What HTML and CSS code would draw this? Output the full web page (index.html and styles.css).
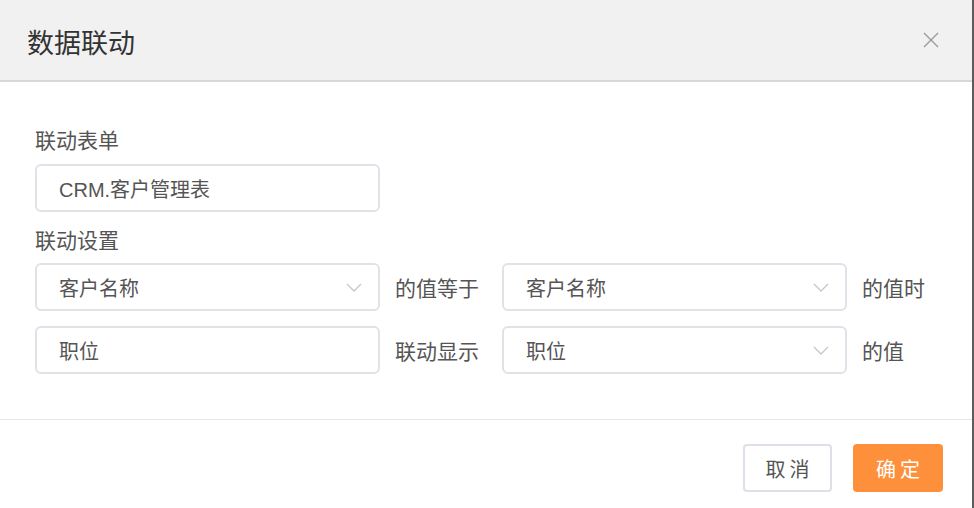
FILE: index.html
```html
<!DOCTYPE html>
<html lang="zh">
<head>
<meta charset="utf-8">
<title>数据联动</title>
<link rel="stylesheet" href="styles.css">
</head>
<body>
<div class="dialog">
  <div class="dialog-header">
    <h1 class="dialog-title">数据联动</h1>
    <button class="close-btn" aria-label="关闭">
      <svg width="16" height="16" viewBox="0 0 16 16"><path d="M1 1L15 15M15 1L1 15" stroke="#9a9a9a" stroke-width="1.4" fill="none"/></svg>
    </button>
  </div>
  <div class="dialog-body">
    <div class="field-label">联动表单</div>
    <div class="input wide">CRM.客户管理表</div>
    <div class="field-label second">联动设置</div>
    <div class="rule-grid">
      <div class="input select">客户名称<svg class="chev" width="16" height="9" viewBox="0 0 16 9"><path d="M1 1L8 8L15 1" stroke="#c3c7cf" stroke-width="1.3" fill="none"/></svg></div>
      <div class="mid">的值等于</div>
      <div class="input select">客户名称<svg class="chev" width="16" height="9" viewBox="0 0 16 9"><path d="M1 1L8 8L15 1" stroke="#c3c7cf" stroke-width="1.3" fill="none"/></svg></div>
      <div class="tail">的值时</div>
      <div class="input">职位</div>
      <div class="mid">联动显示</div>
      <div class="input select">职位<svg class="chev" width="16" height="9" viewBox="0 0 16 9"><path d="M1 1L8 8L15 1" stroke="#c3c7cf" stroke-width="1.3" fill="none"/></svg></div>
      <div class="tail">的值</div>
    </div>
  </div>
  <div class="dialog-footer">
    <button class="btn btn-cancel">取消</button>
    <button class="btn btn-ok">确定</button>
  </div>
</div>
</body>
</html>
```
FILE: styles.css
```css
html, body {
  margin: 0;
  padding: 0;
  background: #5c5c5c;
}
body {
  font-family: "Liberation Sans", "Noto Sans CJK SC", sans-serif;
  color: #555;
}
.dialog {
  width: 972px;
  height: 508px;
  background: #fff;
  box-sizing: border-box;
}
.dialog-header {
  height: 80px;
  background: #f1f1f1;
  border-bottom: 2px solid #d8d8d8;
  display: flex;
  align-items: center;
  justify-content: space-between;
  padding: 0 33px 0 27px;
}
.dialog-title {
  margin: 0;
  font-family: "Noto Sans CJK SC", sans-serif;
  font-weight: 400;
  font-size: 27px;
  color: #333;
  position: relative;
  top: 1px;
}
.close-btn {
  border: 0;
  background: transparent;
  padding: 0;
  width: 16px;
  height: 16px;
  display: flex;
  cursor: pointer;
}
.dialog-body {
  padding: 42px 0 45px 35px;
}
.field-label {
  font-family: "Noto Sans CJK SC", sans-serif;
  font-size: 21px;
  line-height: 30px;
  height: 30px;
  color: #555;
  margin-bottom: 10px;
}
.field-label.second {
  margin-top: 12px;
  margin-bottom: 9px;
}
.input {
  box-sizing: border-box;
  height: 48px;
  border: 2px solid #e0e2e8;
  border-radius: 6px;
  padding: 0 22px;
  display: flex;
  align-items: center;
  font-size: 20px;
  color: #555;
  background: #fff;
}
.input.wide {
  width: 345px;
}
.select {
  justify-content: space-between;
  padding-right: 16px;
}
.chev {
  flex: none;
}
.rule-grid {
  display: grid;
  grid-template-columns: 345px 122px 345px auto;
  row-gap: 15px;
  align-items: center;
}
.mid,
.tail {
  font-family: "Noto Sans CJK SC", sans-serif;
  font-size: 21px;
  padding-left: 15px;
  white-space: nowrap;
  color: #555;
}
.dialog-footer {
  border-top: 1px solid #e6e6e6;
  display: flex;
  justify-content: flex-end;
  gap: 21px;
  padding: 24px 29px 0 0;
}
.btn {
  box-sizing: border-box;
  height: 48px;
  border-radius: 4px;
  font-family: "Noto Sans CJK SC", sans-serif;
  font-size: 20px;
  letter-spacing: 4px;
  text-indent: 4px;
  cursor: pointer;
}
.btn-cancel {
  width: 89px;
  background: #fff;
  border: 2px solid #dde0e6;
  color: #555;
}
.btn-ok {
  width: 90px;
  background: #fe8f3b;
  border: 0;
  color: #fff;
}
```
